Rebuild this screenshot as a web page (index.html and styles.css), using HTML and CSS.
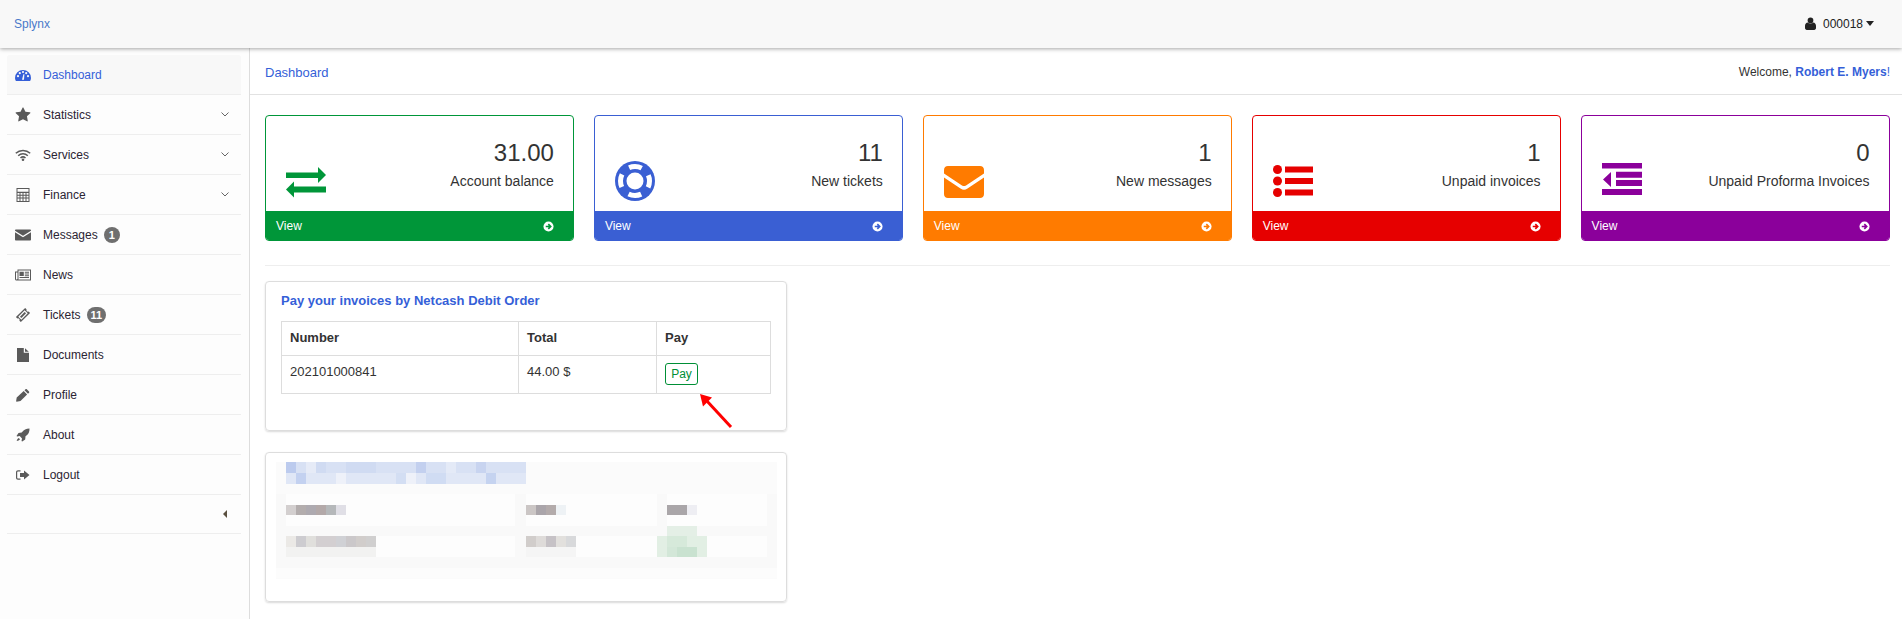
FILE: index.html
```html
<!DOCTYPE html>
<html>
<head>
    <title>Splynx - Dashboard</title>
    <meta name="viewport" content="width=device-width, initial-scale=1.0">
    <link rel="stylesheet" href="styles.css">
</head>
<body>
    <header class="topbar">
        <a class="brand" href="#">Splynx</a>
        <div class="user">
            <svg class="user-icon" viewBox="0 0 12 14"><circle cx="6" cy="3.6" r="3.1"/><path d="M0 12v-2.500C0 7.500 1.500 6 2.800 6c.8.700 1.900 1.100 3.200 1.100S8.400 6.700 9.200 6C10.500 6 12 7.500 12 9.500V12c0 1.200-.8 2-2 2H2c-1.200 0-2-.8-2-2z"/></svg>
            <span>000018</span>
            <span class="caret"></span>
        </div>
    </header>

    <div class="layout">
        <nav class="sidebar">
            <ul class="menu">
                <li class="menu-item active">
                    <svg class="icon" viewBox="0 0 16 16"><path fill-rule="evenodd" d="M0 11a8 8 0 0 1 16 0c0 1.100-.3 2.100-.9 3H.9C.3 13.100 0 12.100 0 11zM3 8.100a1.100 1.100 0 1 0 0 2.200 1.100 1.100 0 0 0 0-2.200zM4.800 5.100a1.100 1.100 0 1 0 0 2.200 1.100 1.100 0 0 0 0-2.200zM8 3.900a1.100 1.100 0 1 0 0 2.200 1.100 1.100 0 0 0 0-2.200zM11.200 5.100a1.100 1.100 0 1 0 0 2.200 1.100 1.100 0 0 0 0-2.200zM13 8.100a1.100 1.100 0 1 0 0 2.200 1.100 1.100 0 0 0 0-2.200zM7 12.800h2l.4-5.600h-1z"/></svg>
                    <span>Dashboard</span>
                </li>
                <li class="menu-item">
                    <svg class="icon" viewBox="0 0 1792 1792"><path d="M1728 647q0 22-26 48l-363 354 86 500q1 7 1 20 0 21-10.500 35.500t-30.500 14.500q-19 0-40-12l-449-236-449 236q-22 12-40 12-21 0-31.500-14.500t-10.500-35.500q0-6 2-20l86-500-364-354q-25-27-25-48 0-37 56-46l502-73 225-455q19-41 49-41t49 41l225 455 502 73q56 9 56 46z"/></svg>
                    <span>Statistics</span>
                    <svg class="chevron" viewBox="0 0 8 5"><path d="M.5.500 4 4 7.500.500"/></svg>
                </li>
                <li class="menu-item">
                    <svg class="icon" viewBox="0 0 16 16"><g class="wifi"><path d="M.8 6.300a10.400 10.400 0 0 1 14.400 0"/><path d="M3.200 8.700a7 7 0 0 1 9.600 0"/><path d="M5.500 11a3.700 3.700 0 0 1 5 0"/></g><circle cx="8" cy="12.700" r="1.300"/></svg>
                    <span>Services</span>
                    <svg class="chevron" viewBox="0 0 8 5"><path d="M.5.500 4 4 7.500.500"/></svg>
                </li>
                <li class="menu-item">
                    <svg class="icon" viewBox="0 0 16 16"><path fill-rule="evenodd" d="M1.500 1h13v14h-13zM2.500 2v2.800h11V2zM2.500 6v1.700h2V6zM5.500 6v1.700h2V6zM8.500 6v1.700h2V6zM11.500 6v1.700h2V6zM2.500 8.700v1.700h2V8.700zM5.500 8.700v1.700h2V8.700zM8.500 8.700v1.700h2V8.700zM11.500 8.700v1.700h2V8.700zM2.500 11.400V14h2v-2.600zM5.500 11.400V14h2v-2.600zM8.500 11.400V14h2v-2.600zM11.500 11.400V14h2v-2.600z"/></svg>
                    <span>Finance</span>
                    <svg class="chevron" viewBox="0 0 8 5"><path d="M.5.500 4 4 7.500.500"/></svg>
                </li>
                <li class="menu-item">
                    <svg class="icon" viewBox="0 0 16 16"><path d="M1 2.500h14c.5 0 1 .4 1 1v.3L8 8.800 0 3.800v-.3c0-.6.500-1 1-1zM0 5.300l8 5 8-5v7.200c0 .6-.5 1-1 1H1c-.5 0-1-.4-1-1z"/></svg>
                    <span>Messages</span>
                    <span class="badge">1</span>
                </li>
                <li class="menu-item">
                    <svg class="icon" viewBox="0 0 16 16"><path fill-rule="evenodd" d="M2.500 2.500H16v11H1.500C.6 13.500 0 12.900 0 12V4.500h2.500zM3.500 3.500V12c0 .2 0 .4-.1.500H15v-9zM1 5.500V12c0 .3.200.5.500.5s1-.2 1-.5V5.500z"/><path d="M4.500 4.800h4.300V9H4.500zM9.800 4.800h4.200v1H9.800zM9.800 6.500h4.200v1H9.800zM9.800 8.200h4.200v1H9.800zM4.500 10h9.500v1H4.500z"/></svg>
                    <span>News</span>
                </li>
                <li class="menu-item">
                    <svg class="icon" viewBox="0 0 16 16"><g transform="rotate(-45 8 8)"><path fill-rule="evenodd" d="M1.500 4.500h13v2a1.600 1.600 0 0 0 0 3v2h-13v-2a1.600 1.600 0 0 0 0-3zM3.500 5.800v4.400h9V5.800z"/><path d="M4.700 7h6.600v2H4.700z"/></g></svg>
                    <span>Tickets</span>
                    <span class="badge">11</span>
                </li>
                <li class="menu-item">
                    <svg class="icon" viewBox="0 0 16 16"><path d="M2 1h6.800v4.800H14V15H2zM10 1.200 13.800 4.800H10z"/></svg>
                    <span>Documents</span>
                </li>
                <li class="menu-item">
                    <svg class="icon" viewBox="0 0 16 16"><path d="M11.800 2.200 14 4.400c.4.400.4.900 0 1.300l-1 1L9.500 3.300l1-1c.4-.4.900-.4 1.300-.1zM8.700 4.100l3.400 3.400-6.600 6.600-3.900.6-.5-.4.600-3.900z"/></svg>
                    <span>Profile</span>
                </li>
                <li class="menu-item">
                    <svg class="icon" viewBox="0 0 16 16"><path d="M14.500 1.500c.2 3.300-1 5.800-4 7.800l-.3 3.200-3 2-.7-.6.500-2.500-2.300-2.300-2.500.5-.7-.7 2-3 3.200-.3c2-3 4.500-4.100 7.800-4.100zM3.800 11l1.200 1.200c-.8 1-1.900 1.500-3.300 1.800.3-1.300.9-2.300 2.100-3z"/></svg>
                    <span>About</span>
                </li>
                <li class="menu-item">
                    <svg class="icon" viewBox="0 0 16 16"><path d="M5.500 3.300v1.200H3.200c-.6 0-1 .4-1 1v5c0 .6.400 1 1 1h2.300v1.200H3c-1.200 0-2-.8-2-2V5.300c0-1.200.8-2 2-2z"/><path d="M9 3.500 14.500 8 9 12.500V10H5V6h4z"/></svg>
                    <span>Logout</span>
                </li>
                <li class="menu-item collapse">
                    <span class="caret-left"></span>
                </li>
            </ul>
        </nav>

        <main class="content">
            <div class="crumbs">
                <a href="#">Dashboard</a>
                <div class="welcome">Welcome, <b>Robert E. Myers</b><em>!</em></div>
            </div>

            <div class="page">
                <div class="cards">
                    <div class="card green">
                        <div class="card-body">
                            <svg class="card-icon" viewBox="0 0 40 48"><path d="M0 14.500h32V9l8 8-8 8v-5H0zM40 28.500H8v-5l-8 8 8 8v-5h32z"/></svg>
                            <div class="card-text">
                                <div class="card-num">31.00</div>
                                <div class="card-label">Account balance</div>
                            </div>
                        </div>
                        <a class="card-foot" href="#">View <svg class="go" viewBox="0 0 12 12"><circle cx="6" cy="6" r="5.500"/><path d="M3 6h5M5.800 3.400 8.400 6 5.800 8.600"/></svg></a>
                    </div>
                    <div class="card blue">
                        <div class="card-body">
                            <svg class="card-icon" viewBox="0 0 40 48"><circle class="solid" cx="20" cy="23" r="20"/><circle class="gaps" cx="20" cy="23" r="14.500"/><circle class="hole" cx="20" cy="23" r="8.500"/></svg>
                            <div class="card-text">
                                <div class="card-num">11</div>
                                <div class="card-label">New tickets</div>
                            </div>
                        </div>
                        <a class="card-foot" href="#">View <svg class="go" viewBox="0 0 12 12"><circle cx="6" cy="6" r="5.500"/><path d="M3 6h5M5.800 3.400 8.400 6 5.800 8.600"/></svg></a>
                    </div>
                    <div class="card orange">
                        <div class="card-body">
                            <svg class="card-icon" viewBox="0 0 40 48"><path d="M4 8h32c2.400 0 4 1.600 4 4v3.500L22 27.500c-1.400.8-2.600.8-4 0L0 15.500V12c0-2.400 1.600-4 4-4zM0 19.500l16.500 11c2.500 1.600 4.500 1.600 7 0L40 19.500V36c0 2.400-1.600 4-4 4H4c-2.400 0-4-1.600-4-4z"/></svg>
                            <div class="card-text">
                                <div class="card-num">1</div>
                                <div class="card-label">New messages</div>
                            </div>
                        </div>
                        <a class="card-foot" href="#">View <svg class="go" viewBox="0 0 12 12"><circle cx="6" cy="6" r="5.500"/><path d="M3 6h5M5.800 3.400 8.400 6 5.800 8.600"/></svg></a>
                    </div>
                    <div class="card red">
                        <div class="card-body">
                            <svg class="card-icon" viewBox="0 0 40 48"><circle cx="4.500" cy="11.500" r="4.500"/><circle cx="4.500" cy="23" r="4.500"/><circle cx="4.500" cy="34.500" r="4.500"/><path d="M12 8.500h28v6H12zM12 20h28v6H12zM12 31.500h28v6H12z"/></svg>
                            <div class="card-text">
                                <div class="card-num">1</div>
                                <div class="card-label">Unpaid invoices</div>
                            </div>
                        </div>
                        <a class="card-foot" href="#">View <svg class="go" viewBox="0 0 12 12"><circle cx="6" cy="6" r="5.500"/><path d="M3 6h5M5.800 3.400 8.400 6 5.800 8.600"/></svg></a>
                    </div>
                    <div class="card purple">
                        <div class="card-body">
                            <svg class="card-icon" viewBox="0 0 40 48"><path d="M0 5h40v5.500H0zM14 13.700h26v6H14zM14 22h26v6H14zM0 31h40v6H0zM9 14v15l-8-7.500z"/></svg>
                            <div class="card-text">
                                <div class="card-num">0</div>
                                <div class="card-label">Unpaid Proforma Invoices</div>
                            </div>
                        </div>
                        <a class="card-foot" href="#">View <svg class="go" viewBox="0 0 12 12"><circle cx="6" cy="6" r="5.500"/><path d="M3 6h5M5.800 3.400 8.400 6 5.800 8.600"/></svg></a>
                    </div>
                </div>

                <hr class="divider">

                <section class="panel">
                    <h3 class="panel-title">Pay your invoices by Netcash Debit Order</h3>
                    <table class="invoices">
                        <tr>
                            <th class="col-number">Number</th>
                            <th class="col-total">Total</th>
                            <th>Pay</th>
                        </tr>
                        <tr>
                            <td>202101000841</td>
                            <td>44.00 $</td>
                            <td><a class="pay-btn" href="#">Pay</a></td>
                        </tr>
                    </table>
                    <svg class="arrow" viewBox="0 0 40 40"><path class="arrow-line" d="M34 35 9 8"/><path class="arrow-head" d="M3 2l12 3.500-9 9z"/></svg>
                </section>

                <section class="panel panel-blurred">
                    <svg class="mosaic" viewBox="0 0 501 117">
                        <rect width="501" height="117" fill="#fbfbfb"/>
                        <rect x="0" y="32" width="501" height="74" fill="#f9f9f9"/>
                        <rect x="10" y="32" width="229" height="32" fill="#fdfdfd"/>
                        <rect x="250" y="32" width="131" height="32" fill="#fdfdfd"/>
                        <rect x="391" y="32" width="100" height="32" fill="#fdfdfd"/>
                        <rect x="10" y="74" width="229" height="21" fill="#fdfdfd"/>
                        <rect x="250" y="74" width="131" height="21" fill="#fdfdfd"/>
                        <rect x="430" y="74" width="61" height="21" fill="#fdfdfd"/>
                        <rect x="0" y="106" width="501" height="10" fill="#fcfcfc"/>

                        <rect x="10" y="0" width="240" height="11" fill="#d8e1f4"/>
                        <rect x="10" y="11" width="240" height="11" fill="#e0e7f6"/>
                        <rect x="10" y="0" width="10" height="11" fill="#bccbee"/>
                        <rect x="30" y="0" width="10" height="11" fill="#e6ebf7"/>
                        <rect x="40" y="0" width="10" height="11" fill="#d0dbf2"/>
                        <rect x="70" y="0" width="30" height="11" fill="#d0dbf2"/>
                        <rect x="140" y="0" width="10" height="11" fill="#c3d0ef"/>
                        <rect x="170" y="0" width="10" height="11" fill="#e4eaf7"/>
                        <rect x="200" y="0" width="10" height="11" fill="#c8d4f0"/>
                        <rect x="20" y="11" width="10" height="11" fill="#c3d1f0"/>
                        <rect x="60" y="11" width="10" height="11" fill="#eef1f9"/>
                        <rect x="120" y="11" width="10" height="11" fill="#d3def3"/>
                        <rect x="130" y="11" width="10" height="11" fill="#eef1f9"/>
                        <rect x="150" y="11" width="20" height="11" fill="#d0dcf3"/>
                        <rect x="210" y="11" width="10" height="11" fill="#c5d3f0"/>

                        <rect x="10" y="43" width="10" height="10" fill="#d3cfcf"/>
                        <rect x="20" y="43" width="10" height="10" fill="#b3adad"/>
                        <rect x="30" y="43" width="10" height="10" fill="#aeaab0"/>
                        <rect x="40" y="43" width="10" height="10" fill="#b3a9a9"/>
                        <rect x="50" y="43" width="10" height="10" fill="#b5b8ba"/>
                        <rect x="60" y="43" width="10" height="10" fill="#e0dfe6"/>
                        <rect x="250" y="43" width="10" height="10" fill="#cbc6c5"/>
                        <rect x="260" y="43" width="10" height="10" fill="#aaa5aa"/>
                        <rect x="270" y="43" width="10" height="10" fill="#b3abab"/>
                        <rect x="280" y="43" width="10" height="10" fill="#eef2f5"/>
                        <rect x="391" y="43" width="20" height="10" fill="#aaa6a9"/>
                        <rect x="411" y="43" width="10" height="10" fill="#eeeef3"/>

                        <rect x="10" y="74" width="10" height="11" fill="#ebe9e6"/>
                        <rect x="20" y="74" width="10" height="11" fill="#cdccd0"/>
                        <rect x="30" y="74" width="10" height="11" fill="#e0dfdc"/>
                        <rect x="40" y="74" width="20" height="11" fill="#d3cfd1"/>
                        <rect x="60" y="74" width="10" height="11" fill="#d0d1d5"/>
                        <rect x="70" y="74" width="10" height="11" fill="#cbc8ca"/>
                        <rect x="80" y="74" width="10" height="11" fill="#d1cdcb"/>
                        <rect x="90" y="74" width="10" height="11" fill="#d0cfcf"/>
                        <rect x="10" y="85" width="90" height="10" fill="#f2f2f1"/>
                        <rect x="250" y="74" width="10" height="11" fill="#d1cdcb"/>
                        <rect x="260" y="74" width="10" height="11" fill="#dedbd9"/>
                        <rect x="270" y="74" width="10" height="11" fill="#c6c2c6"/>
                        <rect x="280" y="74" width="10" height="11" fill="#e2e0dd"/>
                        <rect x="290" y="74" width="10" height="11" fill="#d8d9db"/>
                        <rect x="250" y="85" width="50" height="10" fill="#f5f5f5"/>

                        <rect x="391" y="64" width="30" height="10" fill="#e4efe6"/>
                        <rect x="381" y="74" width="50" height="21" fill="#e2efe4"/>
                        <rect x="391" y="74" width="20" height="11" fill="#d6e9da"/>
                        <rect x="391" y="85" width="10" height="10" fill="#d3e7d8"/>
                        <rect x="401" y="85" width="20" height="10" fill="#c9e2d0"/>
                    </svg>
                </section>
            </div>
        </main>
    </div>
</body>
</html>
```

FILE: styles.css
```css
* {
    box-sizing: border-box;
}

html,
body {
    height: 100%;
}

body {
    font-family: "Liberation Sans", Arial, sans-serif;
    font-size: 12px;
    color: #333;
    background-color: #fff;
    margin: 0;
    overflow: hidden;
}

a {
    color: #355fd8;
    text-decoration: none;
}

.topbar {
    position: relative;
    z-index: 2;
    height: 48px;
    padding: 0 28px 1px 14px;
    display: flex;
    align-items: center;
    justify-content: space-between;
    background-color: #f8f8f8;
    box-shadow: 0 1px 4px rgba(0, 0, 0, 0.35);
}

.brand {
    font-size: 12px;
    color: #4a78c9;
}

.user {
    display: flex;
    align-items: center;
    color: #222;
}

.user-icon {
    width: 11px;
    height: 13px;
    margin-right: 7px;
    fill: #222;
}

.caret {
    margin-left: 3px;
    border-top: 5px solid #222;
    border-left: 4px solid transparent;
    border-right: 4px solid transparent;
}

.layout {
    display: flex;
    height: calc(100% - 48px);
}

.sidebar {
    width: 250px;
    flex: none;
    padding: 7px 8px 0 7px;
    border-right: 1px solid #ddd;
    background-color: #fdfdfd;
}

.menu {
    list-style: none;
    margin: 0;
    padding: 0;
}

.menu-item {
    height: 40px;
    padding: 0 12px 0 8px;
    display: flex;
    align-items: center;
    border-bottom: 1px solid #eee;
    color: #2b2433;
}

.menu-item.active {
    background-color: #f8f8f8;
    border-radius: 3px 3px 0 0;
    color: #355fd8;
}

.menu-item.collapse {
    height: 39px;
    justify-content: flex-end;
    padding-right: 14px;
}

.icon {
    width: 16px;
    height: 16px;
    margin-right: 12px;
    flex: none;
    fill: #5a5a5a;
}

.active .icon {
    fill: #355fd8;
}

.wifi path {
    fill: none;
    stroke: #5a5a5a;
    stroke-width: 1.5;
}

.chevron {
    width: 8px;
    height: 5px;
    margin-left: auto;
    fill: none;
    stroke: #666;
    stroke-width: 1;
}

.badge {
    min-width: 16px;
    height: 16px;
    margin-left: 6px;
    padding: 0 4px;
    border-radius: 8px;
    background-color: #6f6f6f;
    color: #fff;
    font-weight: bold;
    font-size: 11px;
    line-height: 16px;
    text-align: center;
}

.caret-left {
    border-right: 4px solid #5a5040;
    border-top: 4px solid transparent;
    border-bottom: 4px solid transparent;
}

.content {
    flex: 1;
    min-width: 0;
    overflow: hidden;
}

.crumbs {
    height: 47px;
    padding: 2px 12px 0 15px;
    display: flex;
    align-items: center;
    justify-content: space-between;
    border-bottom: 1px solid #e2e2e2;
}

.crumbs a {
    font-size: 13px;
}

.welcome b {
    font-weight: bold;
    color: #355fd8;
}

.welcome em {
    font-style: normal;
    color: #355fd8;
}

.page {
    padding: 20px 12px 0 15px;
}

.cards {
    display: grid;
    grid-template-columns: repeat(5, 1fr);
    gap: 19.5px;
}

.green {
    --tone: #009639;
}

.blue {
    --tone: #3a5fd3;
}

.orange {
    --tone: #ff7b00;
}

.red {
    --tone: #e60000;
}

.purple {
    --tone: #8b009b;
}

.card {
    height: 126px;
    border: 1px solid var(--tone);
    border-radius: 4px;
    overflow: hidden;
}

.card-body {
    height: 95px;
    padding: 0 19.5px 0 20px;
    display: flex;
    justify-content: space-between;
}

.card-icon {
    width: 40px;
    height: 48px;
    margin-top: 42px;
    fill: var(--tone);
}

.solid {
    fill: var(--tone);
}

.gaps {
    fill: none;
    stroke: #fff;
    stroke-width: 5;
    stroke-dasharray: 13 9.78;
    stroke-dashoffset: 6.5;
}

.hole {
    fill: #fff;
}

.card-text {
    padding-top: 24px;
    text-align: right;
}

.card-num {
    font-size: 24px;
    line-height: 26px;
    color: #333;
}

.card-label {
    margin-top: 6px;
    font-size: 14px;
    line-height: 18px;
    color: #333;
}

.card-foot {
    height: 30px;
    padding: 0 19px 0 10px;
    display: flex;
    align-items: center;
    justify-content: space-between;
    background-color: var(--tone);
    color: #fff;
    font-size: 12px;
}

.go {
    width: 11px;
    height: 11px;
}

.go circle {
    fill: #fff;
}

.go path {
    fill: none;
    stroke: var(--tone);
    stroke-width: 1.8;
}

.divider {
    height: 1px;
    margin: 24px 0 15px;
    border: 0;
    background-color: #eee;
}

.panel {
    position: relative;
    width: 522px;
    padding: 9px 16px 36px 15px;
    border: 1px solid #ddd;
    border-radius: 4px;
    box-shadow: 0 1px 2px rgba(0, 0, 0, 0.15);
}

.panel-title {
    margin: 0 0 11px;
    font-size: 13px;
    line-height: 19px;
    font-weight: bold;
    color: #355fd8;
}

.invoices {
    width: 490px;
    border-collapse: collapse;
    table-layout: fixed;
    font-size: 13px;
    line-height: 18px;
    color: #333;
}

.invoices th,
.invoices td {
    padding: 7px 8px 8px;
    border: 1px solid #ddd;
    text-align: left;
    vertical-align: top;
}

.col-number {
    width: 237px;
}

.col-total {
    width: 138px;
}

.pay-btn {
    display: block;
    width: 33px;
    height: 22px;
    border: 1px solid #008f36;
    border-radius: 3px;
    color: #008f36;
    font-size: 12px;
    line-height: 20px;
    text-align: center;
}

.arrow {
    position: absolute;
    left: 431px;
    top: 110px;
    width: 40px;
    height: 40px;
}

.arrow-line {
    fill: none;
    stroke: #f00;
    stroke-width: 3;
}

.arrow-head {
    fill: #f00;
}

.panel-blurred {
    height: 150px;
    margin-top: 21px;
    padding: 9px 0 0 10px;
}

.mosaic {
    display: block;
    width: 501px;
    height: 117px;
    filter: blur(0.7px);
}
```
